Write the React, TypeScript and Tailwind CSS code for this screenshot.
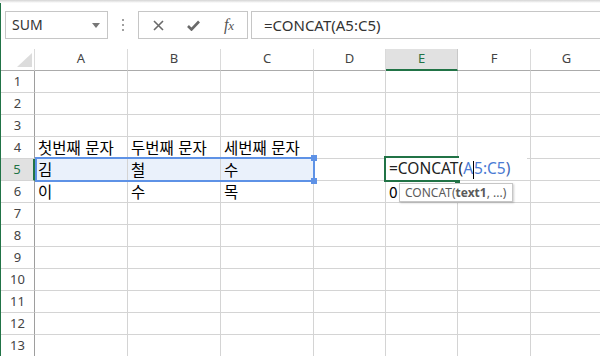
import React from "react";

const COLS = ["A", "B", "C", "D", "E", "F", "G"];
const KR = '"Noto Sans CJK KR", "Noto Sans", sans-serif';
const UI = '"Noto Sans", "Noto Sans CJK KR", sans-serif';

const data: Record<string, string> = {
  "4-0": "첫번째 문자",
  "4-1": "두번째 문자",
  "4-2": "세번째 문자",
  "5-0": "김",
  "5-1": "철",
  "5-2": "수",
  "6-0": "이",
  "6-1": "수",
  "6-2": "목",
  "6-4": "0",
};

export default function App() {
  const rows = Array.from({ length: 13 }, (_, i) => i + 1);
  return (
    <div className="relative w-[600px] h-[356px] overflow-hidden bg-white" style={{ fontFamily: UI }}>
      <div className="h-[3px] bg-gradient-to-b from-[#d4d4d4] to-white" />
      <div className="flex h-[353px]">
        <div className="w-px bg-[#217346] shrink-0" />
        <div className="flex-1 flex flex-col min-w-0">
          {/* formula bar */}
          <div className="h-[46px] pt-[8px] flex items-start shrink-0">
            <div className="ml-[4px] w-[103px] h-[28px] border border-[#c6c6c6] flex items-center justify-between pl-[6px] pr-[7px]">
              <span className="text-[14px] text-[#333] leading-none">SUM</span>
              <svg width="8" height="5" viewBox="0 0 8 5">
                <path d="M0 0 L8 0 L4 5 Z" fill="#777" />
              </svg>
            </div>
            <div className="w-[30px] h-[28px] flex flex-col items-center justify-center gap-[3px]">
              <div className="w-[2px] h-[2px] bg-[#a0a0a0]" />
              <div className="w-[2px] h-[2px] bg-[#a0a0a0]" />
              <div className="w-[2px] h-[2px] bg-[#a0a0a0]" />
            </div>
            <div className="w-[110px] h-[28px] border border-[#c6c6c6] flex items-center">
              <div className="w-[36px] flex justify-center pl-[2px]">
                <svg width="11" height="11" viewBox="0 0 11 11">
                  <path d="M1 1 L10 10 M10 1 L1 10" stroke="#6a6a6a" strokeWidth="1.6" />
                </svg>
              </div>
              <div className="w-[36px] flex justify-center">
                <svg width="13" height="11" viewBox="0 0 13 11">
                  <path d="M1 6 L4.5 9.5 L12 1.5" stroke="#6a6a6a" strokeWidth="2.6" fill="none" />
                </svg>
              </div>
              <div className="w-[36px] flex justify-center">
                <span className="italic text-[16px] text-[#555] leading-none" style={{ fontFamily: '"Liberation Serif", serif' }}>
                  f<span className="text-[13px]">x</span>
                </span>
              </div>
            </div>
            <div className="ml-[3px] flex-1 h-[28px] border border-r-0 border-[#c6c6c6] flex items-center pl-[12px]">
              <span className="text-[15px] text-[#333] leading-none">=CONCAT(A5:C5)</span>
            </div>
          </div>
          {/* grid */}
          <div className="grid grid-cols-[34px_93px_93px_93px_72px_72px_73px_72px] auto-rows-[22px]">
            {/* header row */}
            <div className="relative border-r border-b border-r-[#dadada] border-b-[#ababab]">
              <svg className="absolute left-[16px] top-[4px]" width="15" height="14" viewBox="0 0 15 14">
                <path d="M15 0 L15 14 L0 14 Z" fill="#dcdcdc" />
              </svg>
            </div>
            {COLS.map((c) => {
              const sel = c === "E";
              return (
                <div
                  key={c}
                  className={
                    sel
                      ? "flex items-center justify-center pb-[1px] bg-[#e1e1e1] border-r border-r-[#c8c8c8] border-b-2 border-b-[#217346] text-[13px] text-[#217346]"
                      : "flex items-center justify-center pb-[2px] border-r border-r-[#dadada] border-b border-b-[#ababab] text-[13px] text-[#444]"
                  }
                >
                  {c}
                </div>
              );
            })}
            {rows.map((r) => (
              <React.Fragment key={r}>
                <div
                  className={
                    r === 5
                      ? "flex items-center justify-center bg-[#e1e1e1] border-r-2 border-r-[#217346] border-b border-b-[#d4d4d4] text-[13px] text-[#217346]"
                      : "flex items-center justify-center border-r border-r-[#9e9e9e] border-b border-b-[#d4d4d4] text-[13px] text-[#444]"
                  }
                >
                  {r}
                </div>
                {COLS.map((c, ci) => {
                  const v = data[`${r}-${ci}`];
                  const inSel = r === 5 && ci <= 2;
                  return (
                    <div
                      key={c}
                      className={
                        (inSel ? "bg-[#eaf1fb] " : "") +
                        "flex items-center px-[3px] border-r border-b border-[#d4d4d4] text-[15.5px] text-[#000] whitespace-nowrap overflow-hidden"
                      }
                      style={{ fontFamily: KR, wordSpacing: "1px" }}
                    >
                      {v}
                    </div>
                  );
                })}
              </React.Fragment>
            ))}
          </div>
        </div>
      </div>

      {/* selection range A5:C5 */}
      <div className="absolute left-[35px] top-[157px] w-[280px] h-[25px] border-2 border-[#5e92e6] pointer-events-none" />
      <div className="absolute left-[311px] top-[155px] w-[6px] h-[6px] bg-[#5e92e6]" />
      <div className="absolute left-[311px] top-[178px] w-[6px] h-[6px] bg-[#5e92e6]" />

      {/* editing cell E5 */}
      <div className="absolute left-[386px] top-[158px] w-[141px] h-[22px] bg-white flex items-center pl-[3px]">
        <span className="text-[15.5px] leading-none text-[#222] whitespace-nowrap">
          =CONCAT(<span className="text-[#4a7bd4]">A</span>
          <span className="inline-block w-0 h-[18px] border-l border-black align-middle -my-[4px]" />
          <span className="text-[#4a7bd4]">5:C5</span>
          <span className="text-[#3f66b5]">)</span>
        </span>
      </div>
      <div className="absolute left-[384px] top-[156px] w-[75px] h-[26px] border-2 border-[#217346] border-r-0 pointer-events-none" />
      <div className="absolute left-[455px] top-[180px] w-[5px] h-[4px] bg-[#217346]" />

      {/* tooltip */}
      <div className="absolute left-[399px] top-[183px] w-[114px] h-[19px] bg-white border border-[#c6c6c6] shadow-[1px_1px_2px_rgba(0,0,0,0.2)] flex items-center pl-[5px]">
        <span className="text-[12px] leading-none text-[#5a5a5a] whitespace-nowrap">
          CONCAT(<b className="font-bold">text1</b>, ...)
        </span>
      </div>
    </div>
  );
}
